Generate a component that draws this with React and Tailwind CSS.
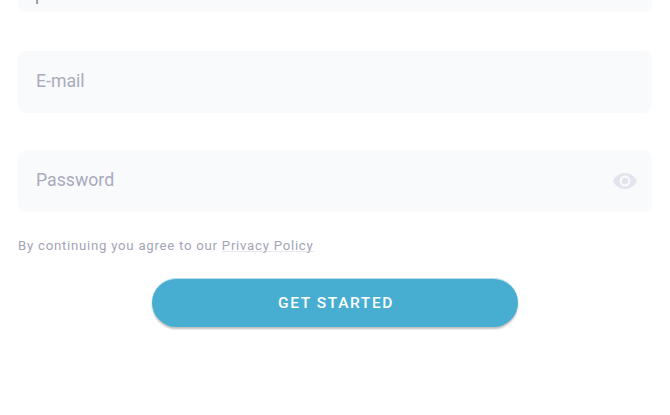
import React, { useState } from 'react';

const EyeIcon = () => (
  <svg viewBox="0 0 24 16" className="block h-4 w-6 fill-[#e3e4ed]" aria-hidden="true">
    <path
      fillRule="evenodd"
      d="M12 0C6.6 0 2 3.3 0 8c2 4.700 6.600 8 12 8s10-3.300 12-8C22 3.300 17.400 0 12 0Zm0 13.500a5.500 5.500 0 1 1 0-11 5.500 5.500 0 0 1 0 11Zm0-2.200a3.300 3.300 0 1 0 0-6.600 3.300 3.300 0 0 0 0 6.600Z"
    />
  </svg>
);

const Field = ({ name, type, placeholder, children }) => (
  <div className="flex h-[62px] w-full items-center rounded-lg bg-[#f9fafc] pl-[18px] pr-[15px]">
    <input
      name={name}
      type={type}
      placeholder={placeholder}
      aria-label={placeholder}
      className="h-full min-w-0 flex-1 bg-transparent pb-[2px] text-[17.700px] text-[#3f4047] outline-none placeholder:text-[#a9aabb]"
    />
    {children}
  </div>
);

const App = () => {
  const [showPassword, setShowPassword] = useState(false);

  return (
    <main className="h-[415px] w-[670px] overflow-hidden bg-white px-[18px] font-['Roboto',sans-serif]">
      <form onSubmit={e => e.preventDefault()}>
        {/* Name field, scrolled almost out of view */}
        <div className="flex h-3 items-end overflow-hidden rounded-b-lg bg-[#f9fafc] pb-[9px] pl-[17px]">
          <span className="-mb-[1px] text-[17.500px] leading-[20px] text-[#8c8c90]">p</span>
        </div>

        <div className="mt-[39px]">
          <Field name="email" type="email" placeholder="E-mail" />
        </div>

        <div className="mt-[37px]">
          <Field
            name="password"
            type={showPassword ? 'text' : 'password'}
            placeholder="Password"
          >
            <button
              type="button"
              aria-label="Toggle password visibility"
              onClick={() => setShowPassword(!showPassword)}
            >
              <EyeIcon />
            </button>
          </Field>
        </div>

        <p className="mt-[25px] text-[13.200px] leading-[18px] tracking-[0.750px] text-[#a3a4b6]">
          By continuing you agree to our{' '}
          <a href="#privacy" className="inline-block h-[15px] border-b border-[#e9eaf0]">
            Privacy Policy
          </a>
        </p>

        {/* Submit */}
        <button
          type="submit"
          className="mx-auto mt-[23px] flex h-[49px] w-[366px] items-center justify-center rounded-full border-t border-[#b5dfeb] bg-[#48aed1] pl-[2px] pt-[2px] text-[15.500px] font-medium tracking-[1.600px] text-white shadow-[0_2px_2px_rgba(0,0,0,0.250)]"
        >
          GET STARTED
        </button>
      </form>
    </main>
  );
};

export default App;
